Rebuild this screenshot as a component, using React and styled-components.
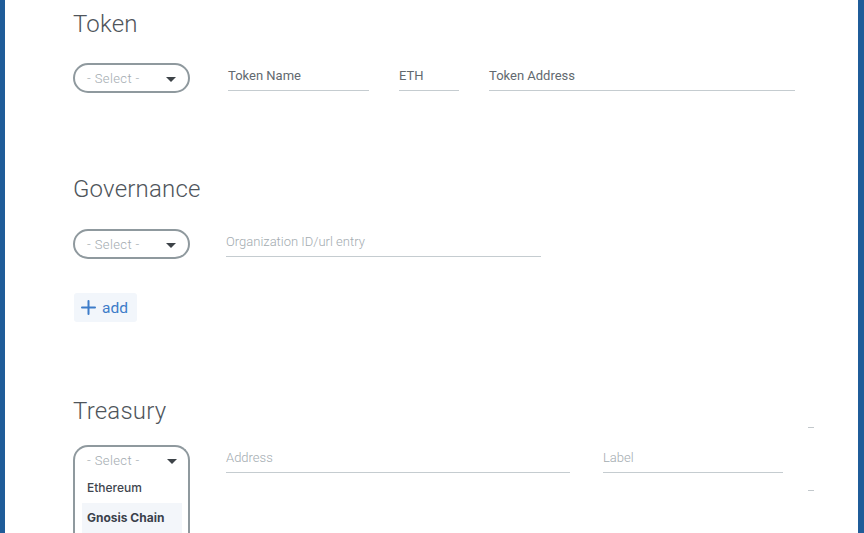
import React from 'react';
import styled, { createGlobalStyle } from 'styled-components';

const GlobalStyle = createGlobalStyle`
  html, body {
    margin: 0;
    padding: 0;
    background: #ffffff;
  }
  body {
    font-family: Roboto, "Noto Sans", sans-serif;
  }
`;

const Frame = styled.div`
  height: 533px;
  overflow: hidden;
  box-sizing: border-box;
  border-left: 5px solid #1f5c99;
  border-right: 6px solid #1f5c99;
  background: #fff;
`;

const Content = styled.div`
  padding-left: 68px;
  display: flex;
  flex-direction: column;
`;

const Heading = styled.h2`
  margin: ${({ $top }) => $top}px 0 0 0;
  height: 36px;
  line-height: 36px;
  font-size: 24px;
  font-weight: 300;
  color: #4f555b;
  letter-spacing: 0.2px;
`;

const Row = styled.div`
  display: flex;
  align-items: flex-start;
  margin-top: ${({ $top }) => $top}px;
`;

const SelectBox = styled.div`
  width: 117px;
  height: 30px;
  box-sizing: border-box;
  border: 2px solid #8f999e;
  border-radius: 15px;
  display: flex;
  align-items: center;
  justify-content: space-between;
  padding: 0 12px 0 12px;
  color: #a3abb0;
  font-size: 13px;
  font-weight: 300;
  letter-spacing: 0.4px;
  flex-shrink: 0;
`;

const Caret = styled.span`
  width: 0;
  height: 0;
  border-left: 5px solid transparent;
  border-right: 5px solid transparent;
  border-top: 5px solid #3d4348;
  margin-top: 2px;
`;

const OpenSelect = styled.div`
  width: 117px;
  height: 100px;
  box-sizing: border-box;
  border: 2px solid #8f999e;
  border-bottom: none;
  border-radius: 15px 15px 0 0;
  padding: 0 6px 0 7px;
  flex-shrink: 0;
`;

const OpenHead = styled.div`
  height: 26px;
  display: flex;
  align-items: center;
  justify-content: space-between;
  padding: 0 5px 0 5px;
  color: #a3abb0;
  font-size: 13px;
  font-weight: 300;
  letter-spacing: 0.4px;
`;

const Option = styled.div`
  height: 30px;
  line-height: 30px;
  padding-left: 5px;
  font-family: Inter, "Noto Sans", sans-serif;
  font-size: 12px;
  font-weight: ${({ $active }) => ($active ? 700 : 500)};
  color: ${({ $active }) => ($active ? '#3a414b' : '#3f464f')};
  background: ${({ $active }) => ($active ? '#f3f6fa' : 'transparent')};
`;

const Field = styled.div`
  width: ${({ $w }) => $w}px;
  margin-left: ${({ $gap }) => $gap}px;
  height: 28px;
  box-sizing: border-box;
  border-bottom: 1.5px solid #c5ccd0;
  display: flex;
  align-items: center;
  padding-bottom: 3px;
  font-size: 13px;
  font-weight: ${({ $filled }) => ($filled ? 400 : 300)};
  color: ${({ $filled }) => ($filled ? '#62696f' : '#a3abb0')};
  flex-shrink: 0;
`;

const AddButton = styled.button`
  margin-top: 34px;
  margin-left: 1px;
  width: 63px;
  height: 29px;
  border: none;
  background: #f2f6fb;
  border-radius: 3px;
  display: flex;
  align-items: center;
  gap: 6px;
  padding: 0 0 0 7px;
  color: #3d7cc9;
  font-family: Roboto, "Noto Sans", sans-serif;
  font-size: 15.5px;
  cursor: pointer;
`;

const DashColumn = styled.div`
  margin-left: 25px;
  margin-top: -18px;
  display: flex;
  flex-direction: column;
  gap: 62px;
`;

const Dash = styled.span`
  width: 6px;
  height: 1px;
  background: #c2c8cc;
  display: block;
`;

const Plus = () => (
  <svg width="15" height="15" viewBox="0 0 15 15">
    <path d="M7.5 1v13M1 7.5h13" stroke="#3d7cc9" strokeWidth="2" strokeLinecap="round" />
  </svg>
);

const Select = () => (
  <SelectBox>
    <span>- Select -</span>
    <Caret />
  </SelectBox>
);

export default function App() {
  return (
    <>
      <GlobalStyle />
      <Frame>
        <Content>
          <Heading $top={6}>Token</Heading>
          <Row $top={21}>
            <Select />
            <Field $w={141} $gap={38} $filled>Token Name</Field>
            <Field $w={60} $gap={30} $filled>ETH</Field>
            <Field $w={306} $gap={30} $filled>Token Address</Field>
          </Row>

          <Heading $top={78}>Governance</Heading>
          <Row $top={22}>
            <Select />
            <Field $w={315} $gap={36}>Organization ID/url entry</Field>
          </Row>
          <AddButton>
            <Plus />
            add
          </AddButton>

          <Heading $top={71}>Treasury</Heading>
          <Row $top={16}>
            <OpenSelect>
              <OpenHead>
                <span>- Select -</span>
                <Caret />
              </OpenHead>
              <Option>Ethereum</Option>
              <Option $active>Gnosis Chain</Option>
            </OpenSelect>
            <Field $w={344} $gap={36}>Address</Field>
            <Field $w={180} $gap={33}>Label</Field>
            <DashColumn>
              <Dash />
              <Dash />
            </DashColumn>
          </Row>
        </Content>
      </Frame>
    </>
  );
}
